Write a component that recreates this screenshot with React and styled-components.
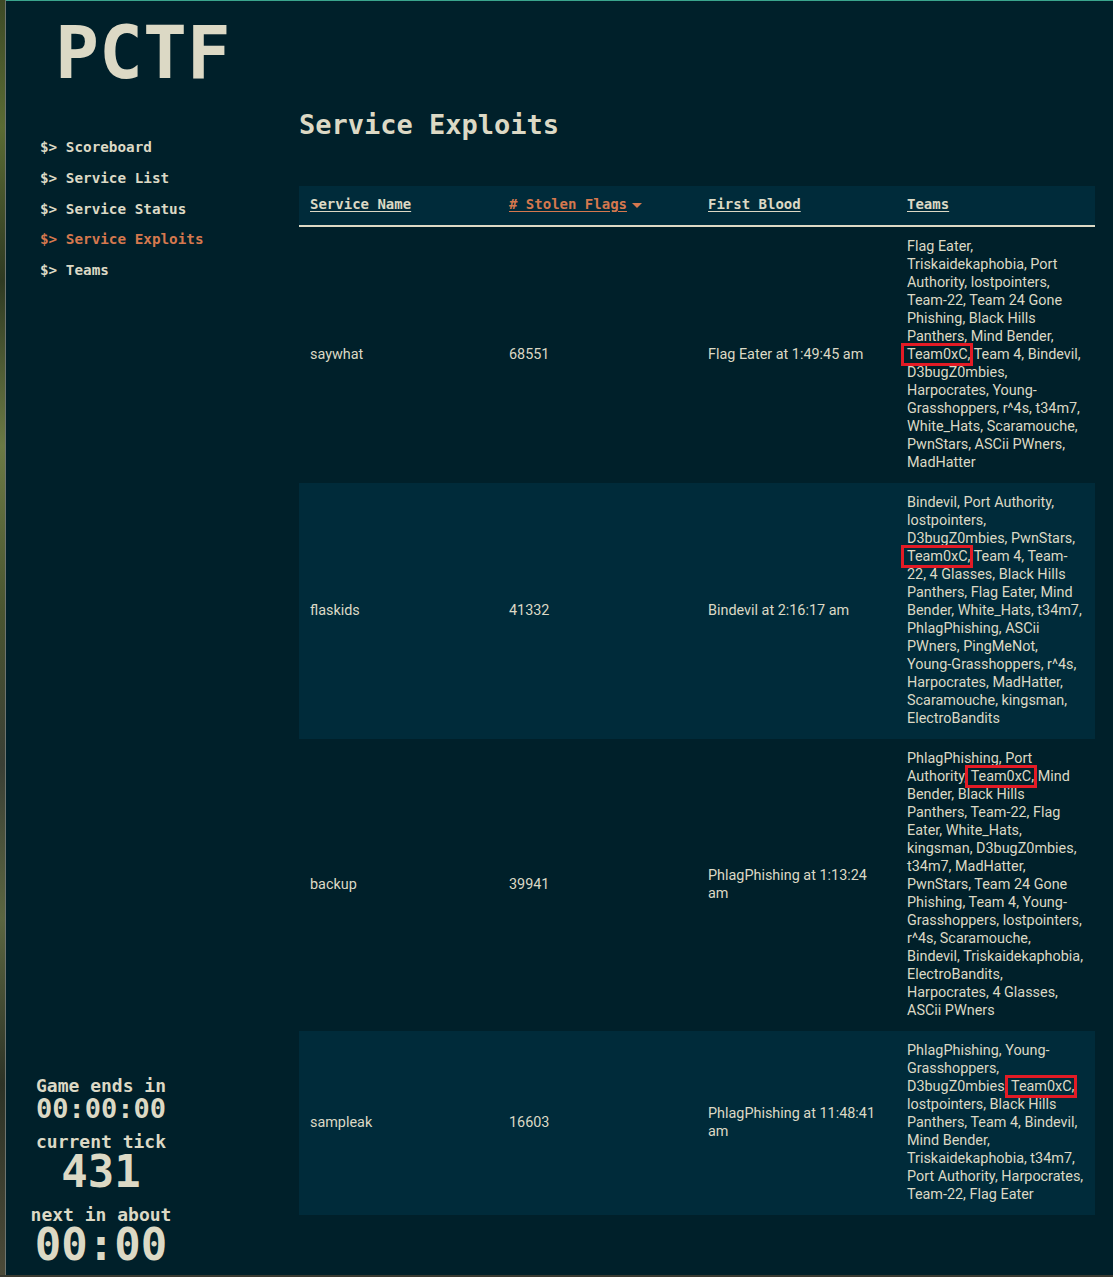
import styled, { createGlobalStyle } from "styled-components";

const GlobalStyle = createGlobalStyle`
  html, body {
    margin: 0;
    padding: 0;
    background: #00202a;
  }
  * {
    box-sizing: border-box;
  }
`;

const mono = `"DejaVu Sans Mono", "Liberation Mono", monospace`;

const Page = styled.div`
  display: flex;
  min-height: 100vh;
  background: #00202a;
  border-bottom: 2px solid #3a3a30;
`;

const Strip = styled.div`
  width: 6px;
  flex-shrink: 0;
  background: linear-gradient(
    180deg,
    #3d4a26 0%,
    #5a6b33 10%,
    #2f3a22 22%,
    #6b7a44 35%,
    #4a5530 48%,
    #3a3f35 60%,
    #5b6640 72%,
    #2d3326 85%,
    #4b4a38 100%
  );
  border-right: 1px solid #6e7570;
`;

const Frame = styled.div`
  flex: 1;
  display: flex;
  border-top: 1px solid #3aa58d;
`;

const Sidebar = styled.aside`
  width: 293px;
  flex-shrink: 0;
  display: flex;
  flex-direction: column;
  font-family: ${mono};
  font-weight: bold;
  color: #dcd9c5;
`;

const Logo = styled.div`
  font-size: 73px;
  line-height: 1;
  padding: 15px 0 0 49px;
`;

const Nav = styled.nav`
  display: flex;
  flex-direction: column;
  padding: 43px 0 0 34px;
`;

const NavItem = styled.a`
  font-size: 14.3px;
  line-height: 30.8px;
  color: ${(p) => (p.$active ? "#d5784e" : "#dcd9c5")};
  text-decoration: none;
  white-space: pre;
`;

const Counter = styled.div`
  margin-top: auto;
  width: 190px;
  padding-bottom: 10px;
  display: flex;
  flex-direction: column;
  align-items: center;
`;

const Label = styled.div`
  font-size: 18px;
  line-height: 20px;
  margin-top: ${(p) => p.$gap || 0}px;
`;

const Value = styled.div`
  font-size: ${(p) => p.$size}px;
  line-height: ${(p) => p.$lh}px;
`;

const Main = styled.main`
  flex: 1;
  padding: 0 18px 40px 0;
`;

const Title = styled.h1`
  font-family: ${mono};
  font-weight: bold;
  font-size: 27px;
  line-height: 32px;
  margin: 108px 0 45px;
  color: #dcd9c5;
`;

const Table = styled.table`
  width: 796px;
  border-collapse: collapse;
  table-layout: fixed;
  font-family: Roboto, "Liberation Sans", sans-serif;
  font-size: 14.4px;
  line-height: 18px;
  color: #dcd9c5;
`;

const HeadRow = styled.tr`
  background: #002b3a;
  border-bottom: 2px solid #dcd9c5;
`;

const Th = styled.th`
  width: 199px;
  text-align: left;
  padding: 9px 11px 12px;
  font-family: ${mono};
  font-weight: bold;
  font-size: 14px;
  line-height: 18px;
`;

const HeadLink = styled.a`
  color: ${(p) => (p.$active ? "#d5784e" : "#dcd9c5")};
  text-decoration: underline;
  text-underline-offset: 2px;
`;

const Caret = styled.span`
  display: inline-block;
  width: 0;
  height: 0;
  margin-left: 5px;
  vertical-align: middle;
  border-left: 5px solid transparent;
  border-right: 5px solid transparent;
  border-top: 5px solid #d5784e;
`;

const Row = styled.tr`
  background: ${(p) => (p.$alt ? "#002b3a" : "#00202a")};
`;

const Td = styled.td`
  padding: 11px 11px;
  vertical-align: middle;
`;

const Mark = styled.span`
  outline: 3px solid #e31b25;
  outline-offset: -1px;
  padding: 1px 1px 1px 4px;
  margin: 0 -1px 0 -4px;
`;

const rows = [
  {
    name: "saywhat",
    flags: 68551,
    blood: "Flag Eater at 1:49:45 am",
    before:
      "Flag Eater, Triskaidekaphobia, Port Authority, lostpointers, Team-22, Team 24 Gone Phishing, Black Hills Panthers, Mind Bender,",
    after:
      "Team 4, Bindevil, D3bugZ0mbies, Harpocrates, Young-Grasshoppers, r^4s, t34m7, White_Hats, Scaramouche, PwnStars, ASCii PWners, MadHatter",
  },
  {
    name: "flaskids",
    flags: 41332,
    blood: "Bindevil at 2:16:17 am",
    before: "Bindevil, Port Authority, lostpointers, D3bugZ0mbies, PwnStars,",
    after:
      "Team 4, Team-22, 4 Glasses, Black Hills Panthers, Flag Eater, Mind Bender, White_Hats, t34m7, PhlagPhishing, ASCii PWners, PingMeNot, Young-Grasshoppers, r^4s, Harpocrates, MadHatter, Scaramouche, kingsman, ElectroBandits",
  },
  {
    name: "backup",
    flags: 39941,
    blood: "PhlagPhishing at 1:13:24 am",
    before: "PhlagPhishing, Port Authority,",
    after:
      "Mind Bender, Black Hills Panthers, Team-22, Flag Eater, White_Hats, kingsman, D3bugZ0mbies, t34m7, MadHatter, PwnStars, Team 24 Gone Phishing, Team 4, Young-Grasshoppers, lostpointers, r^4s, Scaramouche, Bindevil, Triskaidekaphobia, ElectroBandits, Harpocrates, 4 Glasses, ASCii PWners",
  },
  {
    name: "sampleak",
    flags: 16603,
    blood: "PhlagPhishing at 11:48:41 am",
    before: "PhlagPhishing, Young-Grasshoppers, D3bugZ0mbies,",
    after:
      "lostpointers, Black Hills Panthers, Team 4, Bindevil, Mind Bender, Triskaidekaphobia, t34m7, Port Authority, Harpocrates, Team-22, Flag Eater",
  },
];

const navItems = [
  "Scoreboard",
  "Service List",
  "Service Status",
  "Service Exploits",
  "Teams",
];

export default function App() {
  return (
    <>
      <GlobalStyle />
      <Page>
        <Strip />
        <Frame>
          <Sidebar>
            <Logo>PCTF</Logo>
            <Nav>
              {navItems.map((item) => (
                <NavItem key={item} $active={item === "Service Exploits"}>
                  {"$> " + item}
                </NavItem>
              ))}
            </Nav>
            <Counter>
              <Label>Game ends in</Label>
              <Value $size={27} $lh={25}>
                00:00:00
              </Value>
              <Label $gap={11}>current tick</Label>
              <Value $size={44} $lh={40}>
                431
              </Value>
              <Label $gap={13}>next in about</Label>
              <Value $size={44} $lh={40}>
                00:00
              </Value>
            </Counter>
          </Sidebar>
          <Main>
            <Title>Service Exploits</Title>
            <Table>
              <thead>
                <HeadRow>
                  <Th>
                    <HeadLink>Service Name</HeadLink>
                  </Th>
                  <Th>
                    <HeadLink $active># Stolen Flags</HeadLink>
                    <Caret />
                  </Th>
                  <Th>
                    <HeadLink>First Blood</HeadLink>
                  </Th>
                  <Th>
                    <HeadLink>Teams</HeadLink>
                  </Th>
                </HeadRow>
              </thead>
              <tbody>
                {rows.map((r, i) => (
                  <Row key={r.name} $alt={i % 2 === 1}>
                    <Td>{r.name}</Td>
                    <Td>{r.flags}</Td>
                    <Td>{r.blood}</Td>
                    <Td>
                      {r.before} <Mark>Team0xC,</Mark> {r.after}
                    </Td>
                  </Row>
                ))}
              </tbody>
            </Table>
          </Main>
        </Frame>
      </Page>
    </>
  );
}
